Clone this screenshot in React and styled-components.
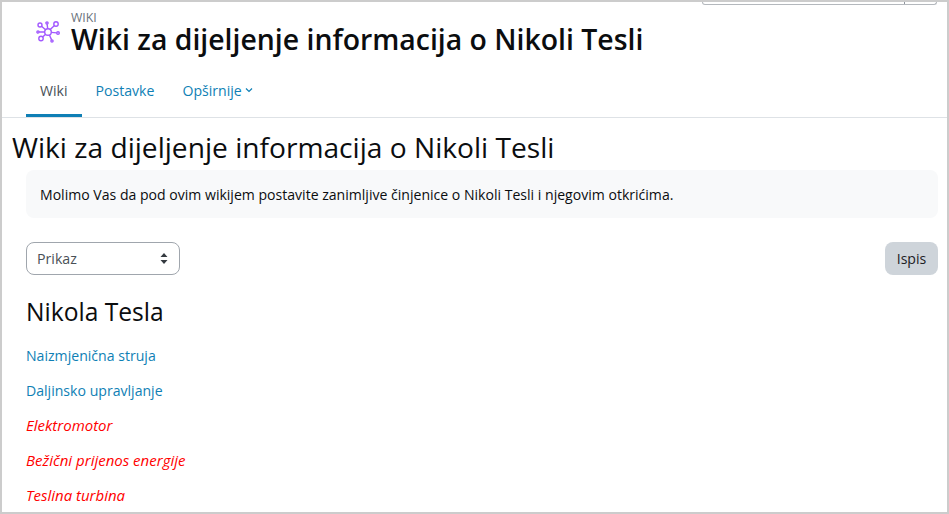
import React from 'react'
import styled, { createGlobalStyle } from 'styled-components'

const Global = createGlobalStyle`
  html, body { margin: 0; padding: 0; background: #fff; }
  body { font-family: "Open Sans", "Noto Sans", sans-serif; color: #111; }
  * { box-sizing: border-box; }
`

const Frame = styled.div`
  width: 949px;
  height: 514px;
  border: 2px solid #cccccc;
  overflow: hidden;
  background: #fff;
`

const TopStrip = styled.div`
  height: 3px;
  display: flex;
  justify-content: flex-end;
  padding-right: 10px;
`

const SearchBox = styled.div`
  width: 235px;
  height: 3px;
  border: 1px solid #b4b8bd;
  border-top: 0;
  border-radius: 0 0 7px 7px;
  display: flex;
  justify-content: flex-end;
`

const SearchDivider = styled.span`
  width: 32px;
  border-left: 1px solid #8f959e;
`

const PageHeader = styled.header`
  display: flex;
  gap: 9px;
  height: 51px;
  padding: 6px 0 0 34px;
`

const ModuleIcon = styled.svg`
  width: 26px;
  height: 26px;
  margin-top: 8px;
  flex: none;
`

const HeaderText = styled.div`
  display: flex;
  flex-direction: column;
`

const Eyebrow = styled.span`
  font-size: 12.3px;
  line-height: 13px;
  color: #6a737b;
`

const Title = styled.h1`
  margin: 0;
  font-size: 28.4px;
  line-height: 30px;
  font-weight: 600;
  color: #0b0d0f;
`

const Tabs = styled.nav`
  display: flex;
  height: 62px;
  padding: 12px 0 0 24px;
  border-bottom: 1px solid #dee2e6;
`

const Tab = styled.a`
  display: flex;
  align-items: center;
  gap: 3px;
  height: 49px;
  padding: 0 14px 2px;
  font-size: 14.1px;
  color: ${p => (p.$active ? '#495057' : '#0f7fb5')};
  border-bottom: 3px solid ${p => (p.$active ? '#0f7fb5' : 'transparent')};
`

const Content = styled.main`
  padding: 0 9px 0 24px;
`

const PageTitle = styled.h2`
  margin: 11px 0 0 -14px;
  font-size: 28.15px;
  line-height: 36px;
  font-weight: 400;
  color: #0b0d0f;
`

const Intro = styled.div`
  margin-top: 5px;
  height: 48px;
  padding: 0 14px;
  display: flex;
  align-items: center;
  background: #f8f9fa;
  border-radius: 8px;
  font-size: 14.07px;
  color: #0b0d0f;
`

const Toolbar = styled.div`
  margin-top: 24px;
  display: flex;
  justify-content: space-between;
`

const SelectBox = styled.div`
  width: 154px;
  height: 33px;
  padding: 0 11px 0 10px;
  display: flex;
  align-items: center;
  justify-content: space-between;
  border: 1px solid #a0a6ad;
  border-radius: 8px;
  font-size: 14.2px;
  color: #495057;
`

const PrintButton = styled.button`
  width: 53px;
  height: 33px;
  padding: 0;
  border: 0;
  border-radius: 8px;
  background: #ced4da;
  font: 14.1px "Open Sans", sans-serif;
  color: #1d2125;
`

const SectionTitle = styled.h3`
  margin: 21px 0 0;
  font-size: 24.6px;
  line-height: 32px;
  font-weight: 400;
  color: #0b0d0f;
`

const PageList = styled.ul`
  list-style: none;
  margin: 18px 0 0;
  padding: 0;
  display: flex;
  flex-direction: column;
  gap: 15px;
`

const PageLink = styled.li`
  height: 20px;
  font-size: ${p => (p.$missing ? '15px' : '14.1px')};
  line-height: ${p => (p.$missing ? '18px' : '20px')};
  font-style: ${p => (p.$missing ? 'italic' : 'normal')};
  color: ${p => (p.$missing ? '#ff0000' : '#0f7fb5')};
`

const pages = [
  { name: 'Naizmjenična struja' },
  { name: 'Daljinsko upravljanje' },
  { name: 'Elektromotor', missing: true },
  { name: 'Bežični prijenos energije', missing: true },
  { name: 'Teslina turbina', missing: true },
]

const WikiIcon = () => (
  <ModuleIcon viewBox="0 0 26 26" fill="none" stroke="#a259ff" strokeWidth="1.4">
    <circle cx="12" cy="13" r="3.3" />
    <circle cx="4" cy="6" r="2" />
    <circle cx="20" cy="5" r="2.2" />
    <circle cx="11" cy="4" r="1.1" />
    <circle cx="22" cy="14" r="1.3" />
    <circle cx="5" cy="19.5" r="2.2" />
    <circle cx="16" cy="22" r="1.1" />
    <circle cx="2" cy="13" r="1.1" />
    <path d="M9.6 10.8 5.5 7.3M14.2 10.5 18.5 6.6M11.7 9.7 11.1 5.1M15.3 13.4 20.7 13.9M9.6 15.3 6.6 18M13.4 16 15.6 20.9M8.7 13H3.1" />
  </ModuleIcon>
)

const Chevron = () => (
  <svg width="8" height="6" viewBox="0 0 8 6" fill="none" stroke="#0f7fb5" strokeWidth="1.2">
    <path d="M1 1.5 4 4.5 7 1.5" />
  </svg>
)

const SelectArrows = () => (
  <svg width="8" height="11" viewBox="0 0 8 11" fill="#343a40">
    <path d="M4 0 7.5 4H.5zM4 11 .5 7h7z" />
  </svg>
)

export default function App() {
  return (
    <Frame>
      <Global />
      <TopStrip>
        <SearchBox>
          <SearchDivider />
        </SearchBox>
      </TopStrip>
      <PageHeader>
        <WikiIcon />
        <HeaderText>
          <Eyebrow>WIKI</Eyebrow>
          <Title>Wiki za dijeljenje informacija o Nikoli Tesli</Title>
        </HeaderText>
      </PageHeader>
      <Tabs>
        <Tab $active>Wiki</Tab>
        <Tab>Postavke</Tab>
        <Tab>Opširnije <Chevron /></Tab>
      </Tabs>
      <Content>
        <PageTitle>Wiki za dijeljenje informacija o Nikoli Tesli</PageTitle>
        <Intro>Molimo Vas da pod ovim wikijem postavite zanimljive činjenice o Nikoli Tesli i njegovim otkrićima.</Intro>
        <Toolbar>
          <SelectBox>
            Prikaz
            <SelectArrows />
          </SelectBox>
          <PrintButton>Ispis</PrintButton>
        </Toolbar>
        <SectionTitle>Nikola Tesla</SectionTitle>
        <PageList>
          {pages.map(p => (
            <PageLink key={p.name} $missing={p.missing}>{p.name}</PageLink>
          ))}
        </PageList>
      </Content>
    </Frame>
  )
}
